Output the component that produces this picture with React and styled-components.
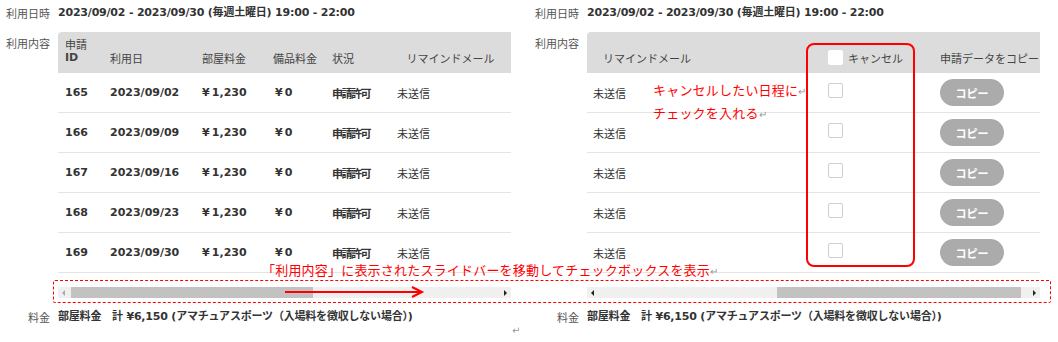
import React from "react";
import styled, { createGlobalStyle } from "styled-components";

const GlobalStyle = createGlobalStyle`
  html, body {
    margin: 0;
    padding: 0;
    background: #fff;
  }
  body {
    font-family: "DejaVu Sans", "Noto Sans CJK JP", sans-serif;
    color: #333;
  }
`;

const Page = styled.div`
  position: relative;
  width: 1058px;
  height: 342px;
  overflow: hidden;
  background: #fff;
`;

const Panels = styled.div`
  display: grid;
  grid-template-columns: 529px 529px;
`;

const Panel = styled.div`
  display: flex;
  flex-direction: column;
  padding-top: 4px;
`;

const FieldRow = styled.div`
  display: grid;
  grid-template-columns: 50px 453px;
  column-gap: 8px;
  align-items: ${(p) => (p.$top ? "start" : "center")};
`;

const Label = styled.div`
  font-family: "Noto Sans CJK JP", sans-serif;
  font-size: 11px;
  line-height: 18px;
  color: #555;
  text-align: right;
  padding-top: ${(p) => p.$pad || 0}px;
`;

const Value = styled.div`
  font-size: 11px;
  font-weight: bold;
  line-height: 18px;
  color: #333;
  white-space: nowrap;
  letter-spacing: -0.2px;
`;

const InfoRow = styled(FieldRow)`
  margin-bottom: 10px;
`;

const TableBox = styled.div`
  display: flex;
  flex-direction: column;
`;

const Row = styled.div`
  display: grid;
  grid-template-columns: ${(p) => p.$cols};
  height: ${(p) => (p.$head ? 41 : 40)}px;
  align-items: ${(p) => (p.$head ? "end" : "center")};
  background: ${(p) => (p.$head ? "#dcdcdc" : "#fff")};
  border-bottom: ${(p) => (p.$head ? "none" : "1px solid #e4e4e4")};
  box-sizing: border-box;
  border-radius: ${(p) => (p.$head ? "4px 0 0 0" : "0")};
`;

const HeadCell = styled.div`
  font-family: "Noto Sans CJK JP", sans-serif;
  font-size: 11px;
  line-height: 14px;
  color: #444;
  padding: 0 0 8px ${(p) => p.$pad ?? 7}px;
  display: flex;
  align-items: center;
  justify-content: ${(p) => (p.$align === "center" ? "center" : "flex-start")};
  gap: 5px;
  white-space: nowrap;
`;

const Stack = styled.span`
  display: flex;
  flex-direction: column;
`;

const IdText = styled.span`
  font-family: "DejaVu Sans", sans-serif;
  font-weight: bold;
  color: #444;
`;

const Cell = styled.div`
  font-size: 11px;
  line-height: 14px;
  font-weight: ${(p) => (p.$plain ? "normal" : "bold")};
  color: #333;
  padding-left: ${(p) => p.$pad ?? 7}px;
  white-space: nowrap;
  letter-spacing: ${(p) => (p.$tight ? "-1.5px" : "0")};
  font-family: ${(p) =>
    p.$jp ? '"Noto Sans CJK JP", sans-serif' : '"DejaVu Sans", "Noto Sans CJK JP", sans-serif'};
`;

const Checkbox = styled.span`
  display: inline-block;
  width: 15px;
  height: 15px;
  box-sizing: border-box;
  background: #fff;
  border: 1px solid ${(p) => (p.$head ? "#fff" : "#cfcfcf")};
  border-radius: 2px;
`;

const CopyButton = styled.button`
  width: 64px;
  height: 27px;
  border: none;
  border-radius: 14px;
  background: #ababab;
  color: #fff;
  font-family: "Noto Sans CJK JP", sans-serif;
  font-size: 11px;
  font-weight: bold;
  padding: 0;
`;

const Track = styled.div`
  position: relative;
  margin-top: 14px;
  height: 11px;
  background: #f0f0f0;
  display: flex;
  align-items: center;
  justify-content: space-between;
  padding: 0 4px;
`;

const Thumb = styled.div`
  position: absolute;
  top: 0;
  bottom: 0;
  left: ${(p) => p.$left}px;
  width: ${(p) => p.$width}px;
  background: #c2c2c2;
`;

const Arrow = styled.span`
  width: 0;
  height: 0;
  border-top: 3px solid transparent;
  border-bottom: 3px solid transparent;
  ${(p) =>
    p.$dir === "left"
      ? `border-right: 3px solid ${p.$dim ? "#aaa" : "#222"};`
      : `border-left: 3px solid ${p.$dim ? "#aaa" : "#222"};`}
`;

const FeeRow = styled(FieldRow)`
  margin-top: 10px;
`;

const Return = styled.span`
  color: #999;
  font-size: 10px;
  font-weight: normal;
`;

const Note = styled.div`
  position: absolute;
  left: ${(p) => p.$x}px;
  top: ${(p) => p.$y}px;
  font-family: "Noto Sans CJK JP", sans-serif;
  font-size: 13px;
  line-height: 16px;
  letter-spacing: 0.2px;
  color: #f00;
  white-space: nowrap;
`;

const CancelFrame = styled.div`
  position: absolute;
  left: 806px;
  top: 43px;
  width: 109px;
  height: 224px;
  box-sizing: border-box;
  border: 2px solid #f00;
  border-radius: 8px;
`;

const DashedFrame = styled.div`
  position: absolute;
  left: 53px;
  top: 280px;
  width: 998px;
  height: 23px;
  box-sizing: border-box;
  border: 1px dashed #f00;
  border-radius: 2px;
`;

const ArrowSvg = styled.svg`
  position: absolute;
  left: 285px;
  top: 286px;
`;

const LoneReturn = styled.span`
  position: absolute;
  left: 512px;
  top: 325px;
  color: #999;
  font-size: 10px;
`;

const rows = [
  { id: 165, date: "2023/09/02" },
  { id: 166, date: "2023/09/09" },
  { id: 167, date: "2023/09/16" },
  { id: 168, date: "2023/09/23" },
  { id: 169, date: "2023/09/30" },
];

const leftCols = "44px 89px 74px 58px 67px 121px";
const rightCols = "232px 112px 109px";

const DATE_TEXT = "2023/09/02 - 2023/09/30 (毎週土曜日) 19:00 - 22:00";
const FEE_TEXT = "部屋料金　計 ¥6,150 (アマチュアスポーツ（入場料を徴収しない場合）)";

const Scrollbar = ({ left, width, dimLeft }) => (
  <Track>
    <Thumb $left={left} $width={width} />
    <Arrow $dir="left" $dim={dimLeft} />
    <Arrow $dir="right" />
  </Track>
);

const LeftPanel = () => (
  <Panel>
    <InfoRow>
      <Label>利用日時</Label>
      <Value>{DATE_TEXT}</Value>
    </InfoRow>
    <FieldRow $top>
      <Label $pad={2}>利用内容</Label>
      <TableBox>
        <Row $head $cols={leftCols}>
          <HeadCell>
            <Stack>
              <span>申請</span>
              <IdText>ID</IdText>
            </Stack>
          </HeadCell>
          <HeadCell $pad={8}>利用日</HeadCell>
          <HeadCell $pad={11}>部屋料金</HeadCell>
          <HeadCell $pad={8}>備品料金</HeadCell>
          <HeadCell $pad={9}>状況</HeadCell>
          <HeadCell $align="center" $pad={0}>リマインドメール</HeadCell>
        </Row>
        {rows.map((r) => (
          <Row key={r.id} $cols={leftCols}>
            <Cell>{r.id}</Cell>
            <Cell $pad={8}>{r.date}</Cell>
            <Cell $pad={11}>¥{"\u2009"}1,230</Cell>
            <Cell $pad={10}>¥{"\u2009"}0</Cell>
            <Cell $pad={9} $jp $tight>申請許可</Cell>
            <Cell $pad={7} $jp $plain>未送信</Cell>
          </Row>
        ))}
        <Scrollbar left={13} width={242} dimLeft />
      </TableBox>
    </FieldRow>
    <FeeRow>
      <Label>料金</Label>
      <Value>{FEE_TEXT}</Value>
    </FeeRow>
  </Panel>
);

const RightPanel = () => (
  <Panel>
    <InfoRow>
      <Label>利用日時</Label>
      <Value>{DATE_TEXT}</Value>
    </InfoRow>
    <FieldRow $top>
      <Label $pad={2}>利用内容</Label>
      <TableBox>
        <Row $head $cols={rightCols}>
          <HeadCell $pad={16}>リマインドメール</HeadCell>
          <HeadCell $pad={9}>
            <Checkbox $head />
            キャンセル
          </HeadCell>
          <HeadCell $pad={9}>申請データをコピー</HeadCell>
        </Row>
        {rows.map((r) => (
          <Row key={r.id} $cols={rightCols}>
            <Cell $pad={6} $jp $plain>未送信</Cell>
            <Cell $pad={9}>
              <Checkbox />
            </Cell>
            <Cell $pad={9}>
              <CopyButton>コピー</CopyButton>
            </Cell>
          </Row>
        ))}
        <Scrollbar left={190} width={244} />
      </TableBox>
    </FieldRow>
    <FeeRow>
      <Label>料金</Label>
      <Value>{FEE_TEXT}</Value>
    </FeeRow>
  </Panel>
);

export default function App() {
  return (
    <Page>
      <GlobalStyle />
      <Panels>
        <LeftPanel />
        <RightPanel />
      </Panels>
      <CancelFrame />
      <DashedFrame />
      <ArrowSvg width="142" height="12" viewBox="0 0 142 12">
        <line x1="0" y1="6" x2="137" y2="6" stroke="#f00" strokeWidth="2" />
        <polyline points="127,1 137,6 127,11" fill="none" stroke="#f00" strokeWidth="2" />
      </ArrowSvg>
      <Note $x={653} $y={82}>
        キャンセルしたい日程に<Return>↵</Return>
      </Note>
      <Note $x={653} $y={105}>
        チェックを入れる<Return>↵</Return>
      </Note>
      <Note $x={262} $y={262}>
        「利用内容」に表示されたスライドバーを移動してチェックボックスを表示<Return>↵</Return>
      </Note>
      <LoneReturn>↵</LoneReturn>
    </Page>
  );
}
